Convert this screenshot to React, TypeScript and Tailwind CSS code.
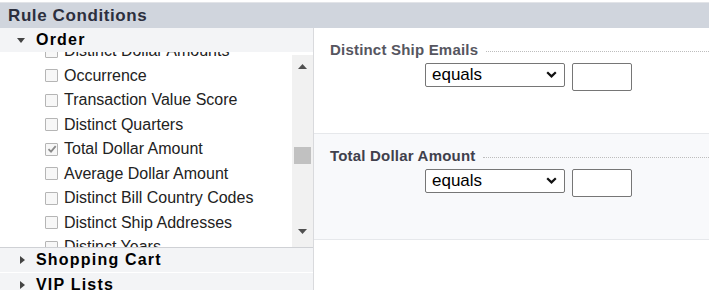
import React from 'react';

const items = [
  { label: 'Distinct Dollar Amounts', checked: false },
  { label: 'Occurrence', checked: false },
  { label: 'Transaction Value Score', checked: false },
  { label: 'Distinct Quarters', checked: false },
  { label: 'Total Dollar Amount', checked: true },
  { label: 'Average Dollar Amount', checked: false },
  { label: 'Distinct Bill Country Codes', checked: false },
  { label: 'Distinct Ship Addresses', checked: false },
  { label: 'Distinct Years', checked: false },
];

const conditions = [
  { title: 'Distinct Ship Emails', bg: 'bg-white', color: 'text-[#565660]' },
  { title: 'Total Dollar Amount', bg: 'bg-[#f8f9fb]', color: 'text-[#40404c]' },
];

const Checkbox = ({ checked }: { checked: boolean }) => (
  <span className="w-[13px] h-[13px] border border-[#b5b5b5] bg-[#f7f7f7] rounded-[1px] flex items-center justify-center shrink-0">
    {checked && (
      <svg width="10" height="10" viewBox="0 0 10 10">
        <path d="M1.5 5.2 L4 7.6 L8.7 2.2" fill="none" stroke="#8a8a8a" strokeWidth="1.8" />
      </svg>
    )}
  </span>
);

const Caret = ({ open }: { open: boolean }) => (
  <span className="w-[8px] flex justify-center shrink-0">
    {open ? (
      <svg width="8" height="5" viewBox="0 0 8 5">
        <path d="M0 0 H8 L4 5 Z" fill="#444" />
      </svg>
    ) : (
      <svg width="5" height="8" viewBox="0 0 5 8" className="ml-[3px]">
        <path d="M0 0 V8 L5 4 Z" fill="#444" />
      </svg>
    )}
  </span>
);

const GroupRow = ({ label, open }: { label: string; open: boolean }) => (
  <div className="h-[24px] bg-[#f3f4f6] flex items-center gap-[11px] pl-[17px] text-[16px] font-bold tracking-[1.2px] text-black">
    <Caret open={open} />
    <span>{label}</span>
  </div>
);

const Condition = ({ title, bg, color }: { title: string; bg: string; color: string }) => (
  <div className={`h-[106px] ${bg} border-b border-[#e6e8eb] pt-[11px]`}>
    <div className="flex items-center gap-[8px] pl-[16px]">
      <span className={`text-[15px] font-bold tracking-[0.2px] ${color}`}>{title}</span>
      <div className="flex-1 border-t border-dotted border-[#bdbdbd] mt-[2px]" />
    </div>
    <div className="flex items-start gap-[7px] pl-[111px] mt-[1px]">
      <div className="w-[140px] h-[24px] border border-[#767676] rounded-[2px] bg-white flex items-center justify-between pl-[6px] pr-[7px] text-[17px] text-black">
        <span>equals</span>
        <svg width="11" height="7" viewBox="0 0 11 7">
          <path d="M1.2 1.2 L5.5 5.4 L9.8 1.2" fill="none" stroke="#111" strokeWidth="2.2" />
        </svg>
      </div>
      <div className="w-[60px] h-[28px] border border-[#767676] rounded-[2px] bg-white" />
    </div>
  </div>
);

export default function App() {
  return (
    <div className="w-[709px] h-[290px] overflow-hidden bg-white font-['Liberation_Sans',Arial,sans-serif]">
      <div className="h-[2px] bg-white" />
      <div className="h-[1px] bg-[#e2e4e8]" />
      <div className="h-[25px] bg-[#d0d5dd] flex items-center pl-[8px] text-[17px] font-bold tracking-[0.6px] text-[#2c2f3d]">
        Rule Conditions
      </div>
      <div className="flex h-[262px]">
        <div className="w-[314px] border-r border-[#d9dadd] flex flex-col">
          <GroupRow label="Order" open />
          <div className="h-[195px] flex">
            <div className="flex-1 overflow-hidden">
              <div className="-mt-[13px]">
                {items.map((it) => (
                  <div key={it.label} className="h-[24.5px] flex items-center gap-[6px] pl-[45px] text-[16px] text-[#222]">
                    <Checkbox checked={it.checked} />
                    <span>{it.label}</span>
                  </div>
                ))}
              </div>
            </div>
            <div className="w-[21px] mt-[3px] bg-[#f1f1f1] flex flex-col items-center">
              <svg width="9" height="5" viewBox="0 0 9 5" className="mt-[9px]">
                <path d="M0 5 H9 L4.5 0 Z" fill="#505050" />
              </svg>
              <div className="w-[17px] h-[17px] bg-[#c1c1c1] mt-[78px]" />
              <svg width="9" height="5" viewBox="0 0 9 5" className="mt-[65px]">
                <path d="M0 0 H9 L4.5 5 Z" fill="#505050" />
              </svg>
            </div>
          </div>
          <div className="border-t border-[#cfd1d5]">
            <GroupRow label="Shopping Cart" open={false} />
            <div className="h-[1px] bg-white" />
            <GroupRow label="VIP Lists" open={false} />
          </div>
        </div>
        <div className="flex-1">
          {conditions.map((c) => (
            <Condition key={c.title} {...c} />
          ))}
        </div>
      </div>
    </div>
  );
}
